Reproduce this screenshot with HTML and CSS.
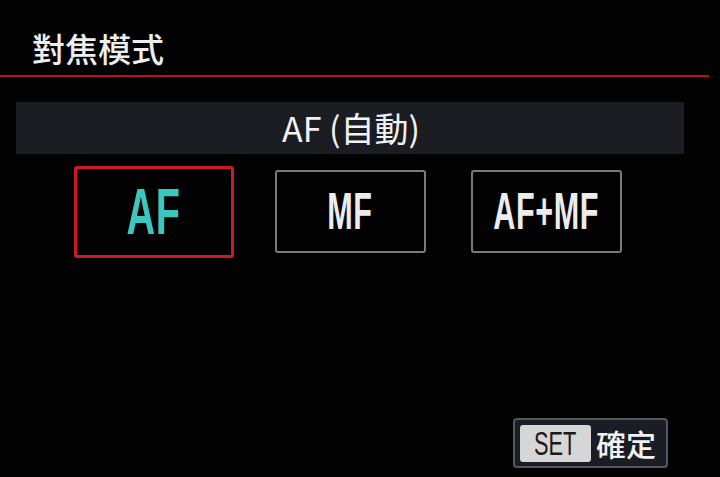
FILE: index.html
```html
<!DOCTYPE html>
<html lang="zh-Hant">
<head>
<meta charset="utf-8">
<link rel="stylesheet" href="styles.css">
</head>
<body>
<div class="screen">
  <header class="header"><h1 class="title">對焦模式</h1></header>
  <div class="info">AF (自動)</div>
  <div class="options">
    <div class="cell"><div class="opt opt-selected"><span class="opt-label">AF</span></div></div>
    <div class="cell"><div class="opt"><span class="opt-label">MF</span></div></div>
    <div class="cell"><div class="opt"><span class="opt-label">AF+MF</span></div></div>
  </div>
  <div class="footer">
    <div class="setbtn"><span class="setkey"><span class="setkey-text">SET</span></span><span class="setlabel">確定</span></div>
  </div>
</div>
</body>
</html>
```
FILE: styles.css
```css
html, body {
  margin: 0;
  padding: 0;
  background: #000;
}
.screen {
  width: 720px;
  height: 477px;
  background: #020202;
  font-family: "Noto Sans CJK TC", "Liberation Sans", sans-serif;
  color: #f0f0f0;
  overflow: hidden;
}
.header {
  width: 709px;
  height: 77px;
  border-bottom: 2px solid #b8121e;
  padding: 32px 0 0 32px;
  box-sizing: border-box;
}
.title {
  margin: 0;
  font-size: 33px;
  font-weight: 500;
  color: #eeeeee;
  line-height: 1;
}
.info {
  margin: 25px 0 0 16px;
  width: 668px;
  height: 52px;
  background: #1b1d23;
  display: flex;
  align-items: center;
  justify-content: center;
  font-size: 34px;
  color: #f2f2f2;
  line-height: 1;
  padding-left: 2px;
  box-sizing: border-box;
}
.options {
  margin: 11px 0 0 56px;
  display: grid;
  grid-template-columns: 196px 196px 196px;
  height: 92px;
  align-items: center;
}
.cell {
  display: flex;
  justify-content: center;
  align-items: center;
}
.opt {
  width: 151px;
  height: 83px;
  box-sizing: border-box;
  border: 2px solid #7a7a7a;
  border-radius: 3px;
  display: flex;
  align-items: center;
  justify-content: center;
  margin-top: -1px;
}
.opt-label {
  display: inline-block;
  font-family: "Liberation Sans", "DejaVu Sans", sans-serif;
  font-weight: bold;
  font-size: 51px;
  line-height: 1;
  color: #ececec;
  transform: scaleX(0.6);
  letter-spacing: 1px;
}
.opt-selected {
  width: 160px;
  height: 92px;
  border: 3px solid #cc1a22;
  margin-top: 1px;
}
.opt-selected .opt-label {
  color: #3cc6c0;
  font-size: 64px;
  transform: scaleX(0.62);
}
.footer {
  margin-top: 161px;
  display: flex;
  justify-content: flex-end;
  padding-right: 52px;
}
.setbtn {
  width: 155px;
  height: 50px;
  box-sizing: border-box;
  border: 2px solid #55575e;
  border-radius: 4px;
  background: #1c1d24;
  display: flex;
  align-items: center;
  padding-left: 5px;
}
.setkey {
  width: 71px;
  height: 37px;
  background: #d6d6d6;
  border-radius: 3px;
  display: flex;
  align-items: center;
  justify-content: center;
}
.setkey-text {
  display: inline-block;
  font-family: "Liberation Sans", sans-serif;
  font-size: 33px;
  color: #1a1a1a;
  transform: scaleX(0.66);
  line-height: 1;
}
.setlabel {
  margin-left: 5px;
  font-size: 30px;
  font-weight: 500;
  color: #f2f2f2;
  line-height: 1;
  letter-spacing: 0;
}
```
